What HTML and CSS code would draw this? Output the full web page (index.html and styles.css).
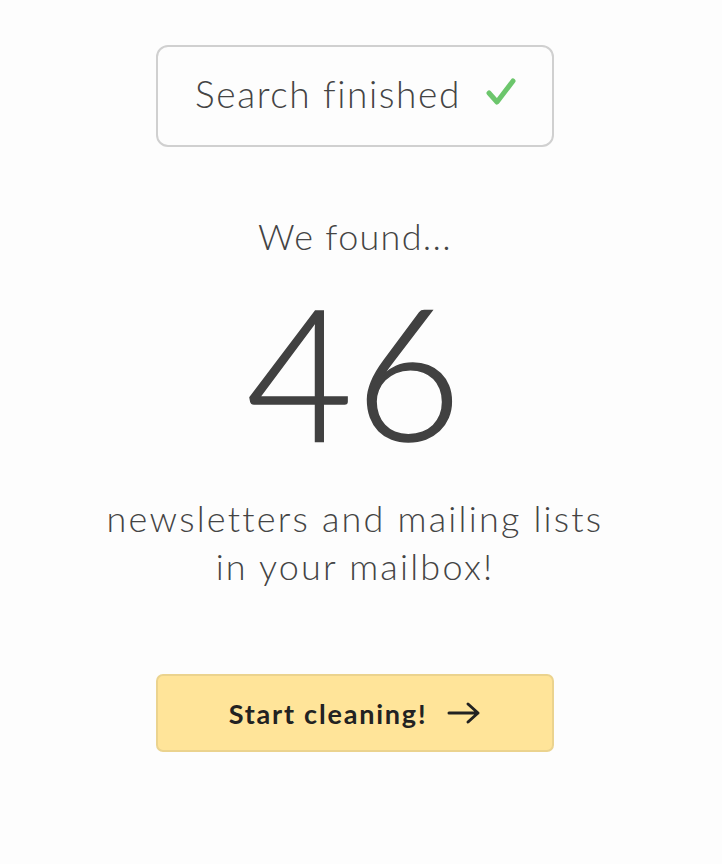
FILE: index.html
```html
<!DOCTYPE html>
<html lang="en">
<head>
  <meta charset="UTF-8" />
  <meta name="viewport" content="width=device-width, initial-scale=1.0"/>
  <title>Search finished</title>
  <link rel="stylesheet" href="styles.css">
</head>
<body>
  <main class="result">
    <div class="status">
      <span>Search finished</span>
      <svg class="check" width="32" height="30" viewBox="0 0 32 30">
        <path d="M4 16 L12 25 L28 4" fill="none" stroke="#6cc66c" stroke-width="5" stroke-linecap="round" stroke-linejoin="round"/>
      </svg>
    </div>

    <p class="found">We found...</p>
    <p class="count">46</p>
    <p class="desc">newsletters and mailing lists<br>in your mailbox!</p>

    <button class="start" type="button">
      <span>Start cleaning!</span>
      <svg width="34" height="24" viewBox="0 0 34 24">
        <path d="M2 12 H31 M21 3 L31 12 L21 21" fill="none" stroke="#222" stroke-width="3" stroke-linecap="round" stroke-linejoin="round"/>
      </svg>
    </button>
  </main>
</body>
</html>
```

FILE: styles.css
```css
body {
  margin: 0;
  padding-right: 12px;
  background: #fdfdfd;
  font-family: "Lato", "Noto Sans", sans-serif;
  color: #444;
}
.result {
  width: 398px;
  margin: 0 auto;
  padding-top: 45px;
  display: flex;
  flex-direction: column;
  align-items: center;
  text-align: center;
}
.status {
  box-sizing: border-box;
  width: 398px;
  height: 102px;
  border: 2px solid #d0d0d0;
  border-radius: 12px;
  display: flex;
  align-items: center;
  justify-content: center;
  gap: 24px;
  font-size: 37px;
  font-weight: 300;
  letter-spacing: 1.6px;
}
.status span {
  margin: -6px 0 0 2px;
}
.check {
  margin-top: -8px;
}
.found {
  margin: 69px 0 0;
  font-size: 36px;
  font-weight: 300;
  line-height: 40px;
  letter-spacing: 1.3px;
}
.count {
  margin: 24px 0 0;
  font-size: 184px;
  font-weight: 300;
  line-height: 180px;
  letter-spacing: 2px;
  color: #414141;
  -webkit-text-stroke: 1.5px #414141;
}
.desc {
  margin: 34px 0 0;
  width: 620px;
  font-size: 36px;
  font-weight: 300;
  line-height: 48px;
  letter-spacing: 2.2px;
}
.start {
  box-sizing: border-box;
  margin-top: 84px;
  width: 398px;
  height: 78px;
  background: #ffe499;
  border: 2px solid #ebd38e;
  border-radius: 7px;
  display: flex;
  align-items: center;
  justify-content: center;
  gap: 20px;
  font-family: "Lato", "Noto Sans", sans-serif;
  font-size: 27px;
  font-weight: 700;
  letter-spacing: 1.8px;
  color: #222;
  cursor: pointer;
}
```
